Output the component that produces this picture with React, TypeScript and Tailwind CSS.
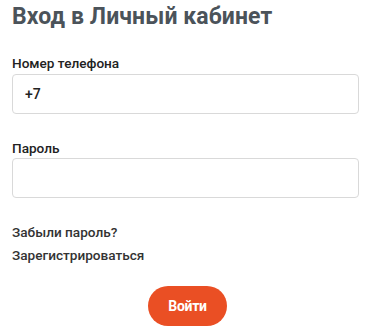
import React, { useState } from 'react';

export default function App() {
  const [phone, setPhone] = useState('+7');
  const [password, setPassword] = useState('');

  return (
    <div className="w-[375px] h-[333px] bg-white px-3 pt-[3px] font-['Roboto',sans-serif] overflow-hidden">
      <h1 className="text-[23px] leading-[28px] font-bold text-[#4b535a] tracking-[0.1px]">
        Вход в Личный кабинет
      </h1>

      <form className="mt-[24px] flex flex-col" onSubmit={e => e.preventDefault()}>
        <label className="text-[13.6px] leading-[16px] font-medium text-[#222]">Номер телефона</label>
        <input
          value={phone}
          onChange={e => setPhone(e.target.value)}
          className="mt-[3px] h-[40px] w-[347px] rounded-[4px] border border-[#d9d9d9] px-3 text-[14px] font-medium text-[#222] outline-none"
        />

        <label className="mt-[26px] text-[13.6px] leading-[16px] font-medium text-[#222]">Пароль</label>
        <input
          type="password"
          value={password}
          onChange={e => setPassword(e.target.value)}
          className="mt-[2px] h-[40px] w-[347px] rounded-[4px] border border-[#d9d9d9] px-3 text-[14px] outline-none"
        />

        <a href="#" className="mt-[26px] self-start text-[13.6px] leading-[16px] font-medium text-[#333]">Забыли пароль?</a>
        <a href="#" className="mt-[7px] self-start text-[13.6px] leading-[16px] font-medium text-[#333]">Зарегистрироваться</a>

        <div className="mt-[23px] flex justify-center">
          <button
            type="submit"
            className="h-[40px] w-[79px] rounded-full bg-[#ea4f24] text-[14px] font-bold text-white tracking-[-0.3px]"
          >
            Войти
          </button>
        </div>
      </form>
    </div>
  );
}
